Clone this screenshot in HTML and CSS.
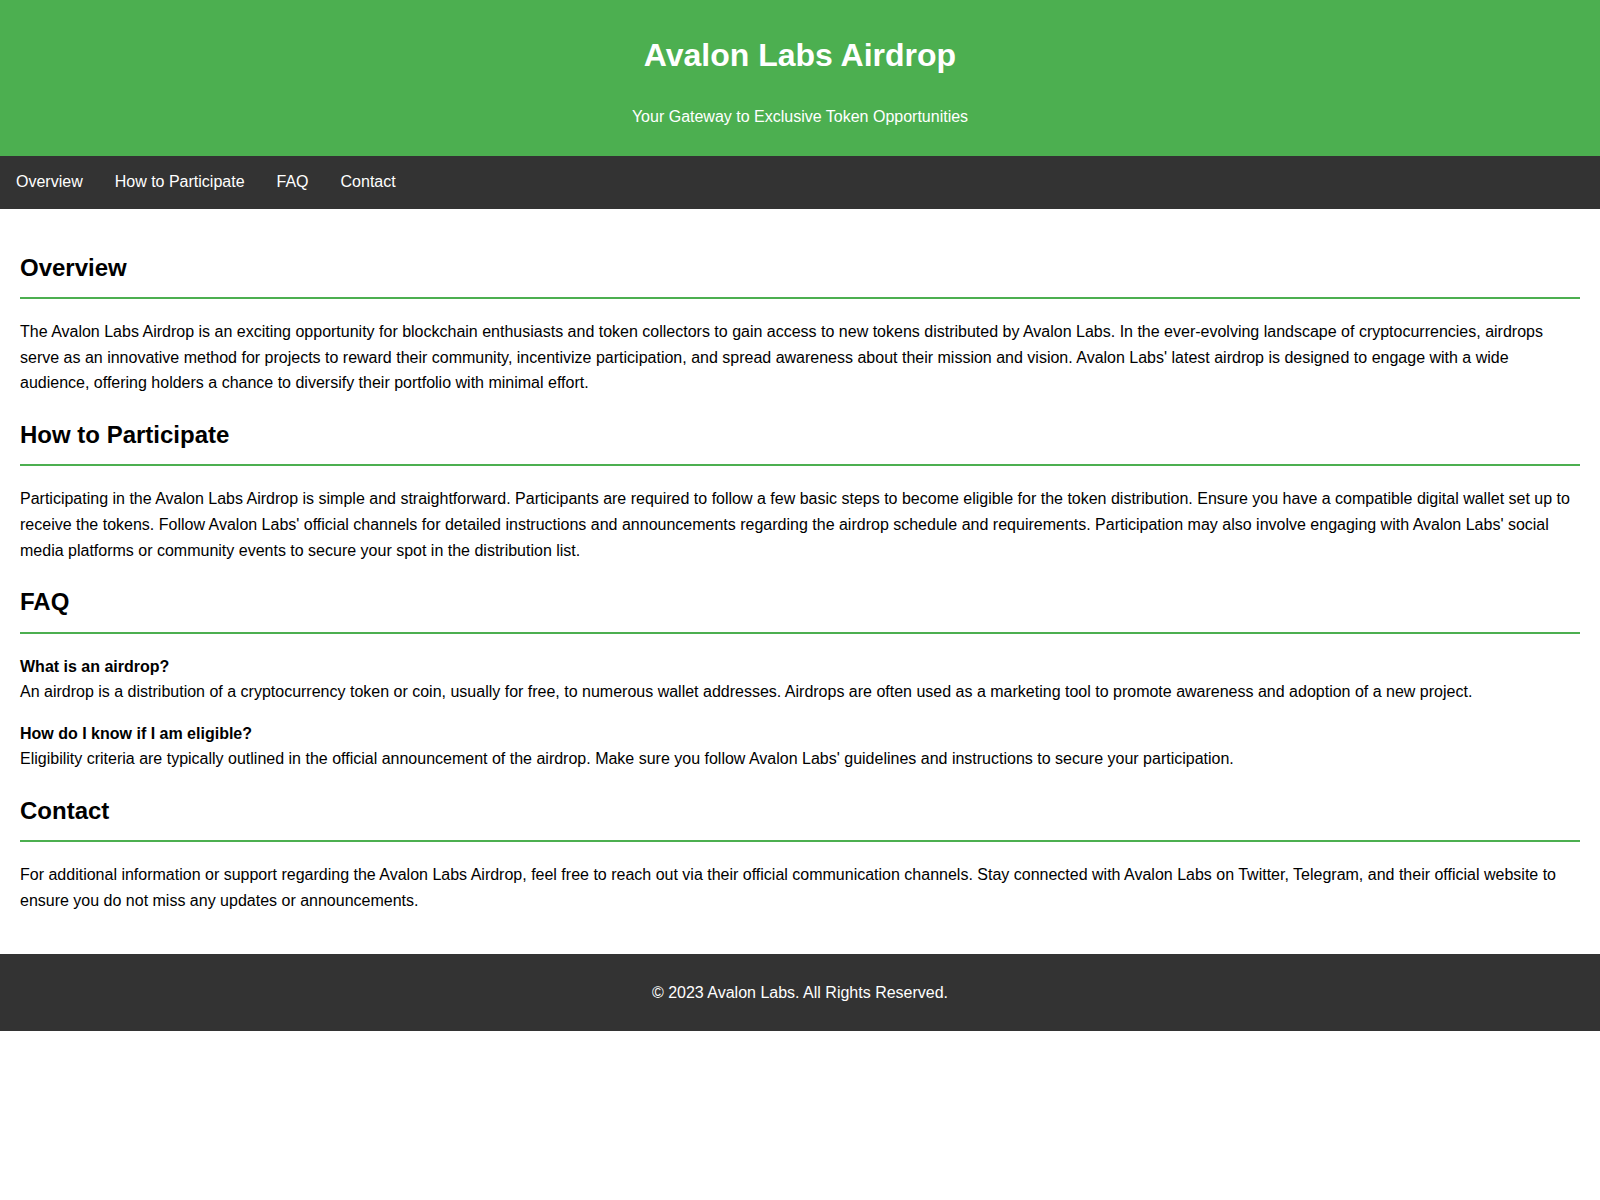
FILE: index.html
```html
<!DOCTYPE html>
<html lang="en">
<head>
<meta charset="UTF-8">
<title>Avalon Labs Airdrop</title>
<link rel="stylesheet" href="styles.css">
</head>
<body>
<header class="site-header">
  <h1 class="site-title">Avalon Labs Airdrop</h1>
  <p class="site-tagline">Your Gateway to Exclusive Token Opportunities</p>
</header>
<nav class="site-nav">
  <a class="nav-link" href="#overview">Overview</a>
  <a class="nav-link" href="#participate">How to Participate</a>
  <a class="nav-link" href="#faq">FAQ</a>
  <a class="nav-link" href="#contact">Contact</a>
</nav>
<main class="content">
  <section class="section" id="overview">
    <h2 class="section-title">Overview</h2>
    <p class="section-text">The Avalon Labs Airdrop is an exciting opportunity for blockchain enthusiasts and token collectors to gain access to new tokens distributed by Avalon Labs. In the ever-evolving landscape of cryptocurrencies, airdrops serve as an innovative method for projects to reward their community, incentivize participation, and spread awareness about their mission and vision. Avalon Labs' latest airdrop is designed to engage with a wide audience, offering holders a chance to diversify their portfolio with minimal effort.</p>
  </section>
  <section class="section" id="participate">
    <h2 class="section-title">How to Participate</h2>
    <p class="section-text">Participating in the Avalon Labs Airdrop is simple and straightforward. Participants are required to follow a few basic steps to become eligible for the token distribution. Ensure you have a compatible digital wallet set up to receive the tokens. Follow Avalon Labs' official channels for detailed instructions and announcements regarding the airdrop schedule and requirements. Participation may also involve engaging with Avalon Labs' social media platforms or community events to secure your spot in the distribution list.</p>
  </section>
  <section class="section" id="faq">
    <h2 class="section-title">FAQ</h2>
    <div class="faq-item">
      <h3 class="faq-question">What is an airdrop?</h3>
      <p class="faq-answer">An airdrop is a distribution of a cryptocurrency token or coin, usually for free, to numerous wallet addresses. Airdrops are often used as a marketing tool to promote awareness and adoption of a new project.</p>
    </div>
    <div class="faq-item">
      <h3 class="faq-question">How do I know if I am eligible?</h3>
      <p class="faq-answer">Eligibility criteria are typically outlined in the official announcement of the airdrop. Make sure you follow Avalon Labs' guidelines and instructions to secure your participation.</p>
    </div>
  </section>
  <section class="section" id="contact">
    <h2 class="section-title">Contact</h2>
    <p class="section-text">For additional information or support regarding the Avalon Labs Airdrop, feel free to reach out via their official communication channels. Stay connected with Avalon Labs on Twitter, Telegram, and their official website to ensure you do not miss any updates or announcements.</p>
  </section>
</main>
<footer class="site-footer">
  <p class="footer-text">&copy; 2023 Avalon Labs. All Rights Reserved.</p>
</footer>
</body>
</html>
```
FILE: styles.css
```css
body {
  margin: 0;
  font-family: "Liberation Sans", Arial, sans-serif;
  font-size: 16px;
  line-height: 1.6;
  color: #000;
  background: #fff;
}

.site-header {
  background: #4caf50;
  color: #fff;
  text-align: center;
  padding: 30px 20px 26px;
}

.site-title {
  margin: 0 0 23px;
  font-size: 32px;
  line-height: 1.6;
}

.site-tagline {
  margin: 0;
}

.site-nav {
  display: flex;
  background: #333;
}

.nav-link {
  display: block;
  color: #fff;
  text-decoration: none;
  padding: 13.5px 16px;
  line-height: 26px;
}

.content {
  padding: 20px 20px 21px;
}

.section {
  margin-bottom: 20px;
}

.section-title {
  font-size: 24px;
  margin: 20px 0;
  padding-bottom: 10px;
  border-bottom: 2px solid #4caf50;
}

.section-text {
  margin: 16px 0;
}

.faq-question {
  font-size: 16px;
  margin: 16px 0 0;
}

.faq-answer {
  margin: 0;
}

.site-footer {
  background: #333;
  color: #fff;
  text-align: center;
  padding: 25.5px 20px;
}

.footer-text {
  margin: 0;
}
```
